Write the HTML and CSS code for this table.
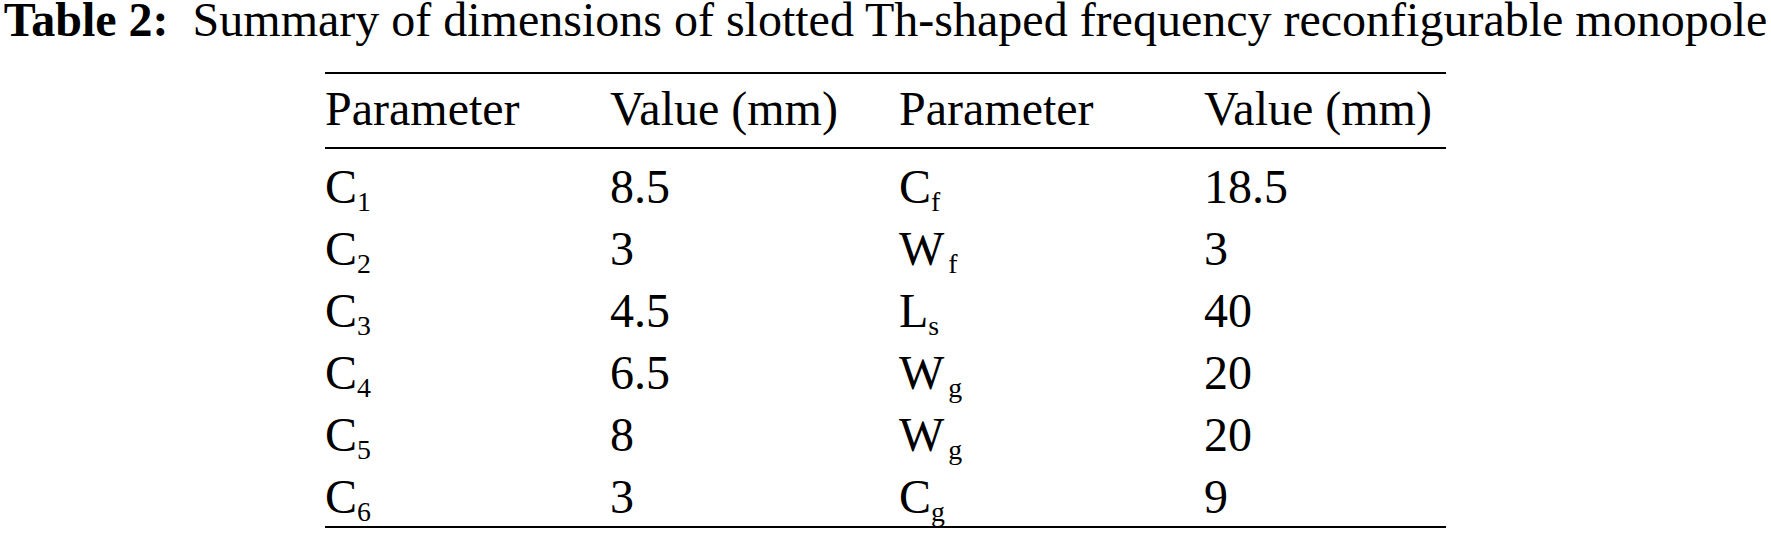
FILE: index.html
```html
<!DOCTYPE html>
<html lang="en">
<head>
    <meta charset="UTF-8">
    <meta name="viewport" content="width=device-width, initial-scale=1.0">
    <title>Table 2</title>
    <link rel="stylesheet" href="styles.css">
</head>
<body>
    <p class="caption"><strong>Table 2:</strong>&nbsp; Summary of dimensions of slotted Th-shaped frequency reconfigurable monopole</p>

    <table class="dims">
        <colgroup>
            <col class="col-a">
            <col class="col-b">
            <col class="col-c">
            <col class="col-d">
        </colgroup>
        <thead>
            <tr>
                <th>Parameter</th>
                <th>Value (mm)</th>
                <th>Parameter</th>
                <th>Value (mm)</th>
            </tr>
        </thead>
        <tbody>
            <tr>
                <td>C<sub>1</sub></td>
                <td>8.5</td>
                <td>C<sub>f</sub></td>
                <td>18.5</td>
            </tr>
            <tr>
                <td>C<sub>2</sub></td>
                <td>3</td>
                <td>W<sub class="gap">f</sub></td>
                <td>3</td>
            </tr>
            <tr>
                <td>C<sub>3</sub></td>
                <td>4.5</td>
                <td>L<sub>s</sub></td>
                <td>40</td>
            </tr>
            <tr>
                <td>C<sub>4</sub></td>
                <td>6.5</td>
                <td>W<sub class="gap">g</sub></td>
                <td>20</td>
            </tr>
            <tr>
                <td>C<sub>5</sub></td>
                <td>8</td>
                <td>W<sub class="gap">g</sub></td>
                <td>20</td>
            </tr>
            <tr>
                <td>C<sub>6</sub></td>
                <td>3</td>
                <td>C<sub>g</sub></td>
                <td>9</td>
            </tr>
        </tbody>
    </table>
</body>
</html>
```

FILE: styles.css
```css
body {
    margin: 0;
    font-family: "Liberation Serif", "Times New Roman", serif;
    font-size: 48px;
    color: #000;
    background: #fff;
}
.caption {
    margin: 0;
    line-height: 40px;
    text-align: center;
    white-space: nowrap;
}
.caption strong {
    font-weight: bold;
}
.dims {
    margin: 32px auto 0;
    border-collapse: collapse;
    table-layout: fixed;
    width: 1121px;
}
.col-a { width: 285px; }
.col-b { width: 289px; }
.col-c { width: 305px; }
.col-d { width: 242px; }
.dims thead {
    border-top: 2px solid #000;
    border-bottom: 2px solid #000;
}
.dims tbody {
    border-bottom: 2px solid #000;
}
.dims th,
.dims td {
    text-align: left;
    font-weight: normal;
    line-height: 50px;
    padding: 12px 0 0;
    white-space: nowrap;
}
.dims th {
    padding: 10px 0 13px;
}
.dims tbody tr:first-child td {
    padding-top: 13px;
}
.dims tbody tr:last-child td {
    padding-bottom: 4px;
}
.dims sub {
    font-size: 0.58em;
    line-height: 0;
    vertical-align: -0.3em;
}
.dims sub.gap {
    margin-left: 4px;
}
```
